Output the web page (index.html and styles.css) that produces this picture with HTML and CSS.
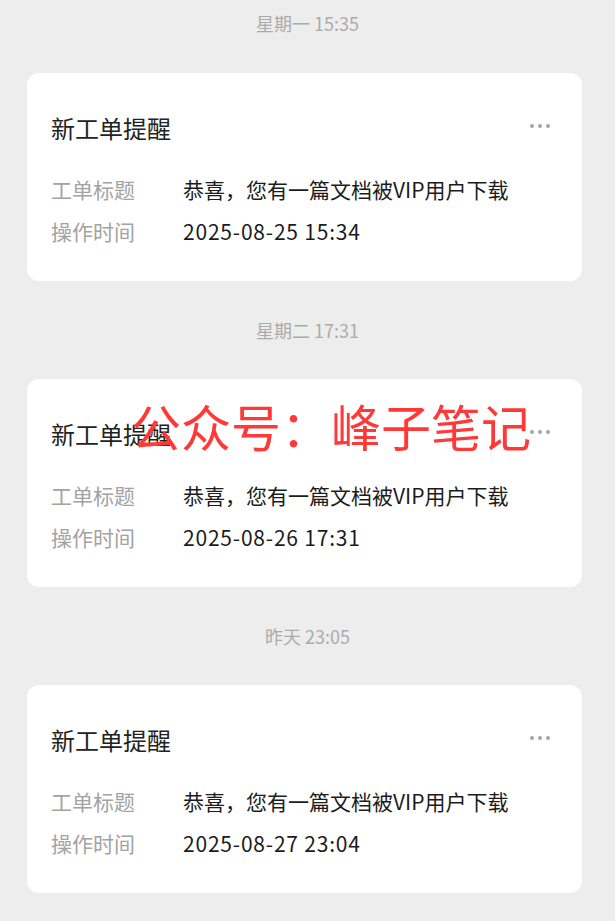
FILE: index.html
```html
<!DOCTYPE html>
<html lang="zh-CN">
<head>
<meta charset="utf-8">
<link rel="stylesheet" href="styles.css">
</head>
<body>
<div class="feed">
  <section class="group">
    <div class="time">星期一 15:35</div>
    <div class="card">
      <div class="card-head">
        <div class="title">新工单提醒</div>
        <div class="more"><span></span><span></span><span></span></div>
      </div>
      <div class="row"><div class="label">工单标题</div><div class="value">恭喜，您有一篇文档被VIP用户下载</div></div>
      <div class="row"><div class="label">操作时间</div><div class="value num">2025-08-25 15:34</div></div>
    </div>
  </section>
  <section class="group">
    <div class="time">星期二 17:31</div>
    <div class="card">
      <div class="card-head">
        <div class="title">新工单提醒</div>
        <div class="more"><span></span><span></span><span></span></div>
      </div>
      <div class="row"><div class="label">工单标题</div><div class="value">恭喜，您有一篇文档被VIP用户下载</div></div>
      <div class="row"><div class="label">操作时间</div><div class="value num">2025-08-26 17:31</div></div>
      <div class="watermark">公众号：峰子笔记</div>
    </div>
  </section>
  <section class="group">
    <div class="time">昨天 23:05</div>
    <div class="card">
      <div class="card-head">
        <div class="title">新工单提醒</div>
        <div class="more"><span></span><span></span><span></span></div>
      </div>
      <div class="row"><div class="label">工单标题</div><div class="value">恭喜，您有一篇文档被VIP用户下载</div></div>
      <div class="row"><div class="label">操作时间</div><div class="value num">2025-08-27 23:04</div></div>
    </div>
  </section>
</div>
</body>
</html>
```
FILE: styles.css
```css
html, body {
  margin: 0;
  padding: 0;
  background: #ededed;
}
body {
  font-family: "Noto Sans CJK SC", "Noto Sans", sans-serif;
  width: 615px;
  height: 921px;
  overflow: hidden;
}
.feed {
  padding-top: 13px;
}
.group {
  display: flex;
  flex-direction: column;
  margin-bottom: 39px;
}
.time {
  height: 20px;
  line-height: 20px;
  font-size: 18px;
  color: #ababab;
  text-align: center;
  margin-bottom: 40px;
}
.group + .group .time {
  margin-bottom: 39px;
}
.card {
  position: relative;
  margin-left: 27px;
  width: 555px;
  box-sizing: border-box;
  background: #fff;
  border-radius: 12px;
  padding: 39px 32px 29px 24px;
}
.card-head {
  display: flex;
  align-items: center;
  justify-content: space-between;
  height: 32px;
  margin-bottom: 24px;
}
.title {
  font-size: 24px;
  line-height: 32px;
  color: #222;
}
.more {
  display: flex;
  gap: 4px;
  margin-top: -5px;
}
.more span {
  width: 4px;
  height: 4px;
  border-radius: 50%;
  background: #a6a6a6;
}
.row {
  display: flex;
  height: 42px;
  align-items: center;
}
.label {
  width: 132px;
  flex: none;
  font-size: 21px;
  color: #a3a3a3;
}
.value {
  font-size: 21px;
  color: #1c1c1c;
}
.num {
  letter-spacing: 0.8px;
}
.watermark {
  position: absolute;
  left: 104px;
  top: 18px;
  font-size: 50px;
  line-height: 56px;
  color: #ff3838;
  white-space: nowrap;
}
```
